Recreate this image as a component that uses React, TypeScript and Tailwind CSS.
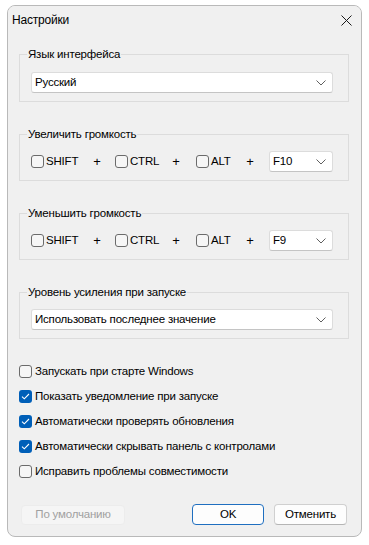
import React from "react";

const font = { fontFamily: '"Liberation Sans", Arial, sans-serif', letterSpacing: "-0.2px" };

function Chevron() {
  return (
    <svg width="10" height="6" viewBox="0 0 10 6" className="shrink-0">
      <path d="M0.5 0.5 L5 5 L9.5 0.5" fill="none" stroke="#5f5f5f" strokeWidth="1" />
    </svg>
  );
}

function Select({ value, className }: { value: string; className: string }) {
  return (
    <div
      className={
        "flex items-center justify-between bg-white border border-[#dcdcdc] border-b-[#c4c4c4] rounded-[3px] pl-[3px] pr-[6px] " +
        className
      }
    >
      <span className="text-[11.5px] text-black leading-none">{value}</span>
      <Chevron />
    </div>
  );
}

function Box({ checked = false }: { checked?: boolean }) {
  if (checked)
    return (
      <div className="w-[13px] h-[13px] rounded-[3px] bg-[#005fb8] flex items-center justify-center shrink-0">
        <svg width="9" height="7" viewBox="0 0 9 7">
          <path d="M1 3.6 L3.3 5.8 L8 1" fill="none" stroke="white" strokeWidth="1.1" />
        </svg>
      </div>
    );
  return <div className="w-[13px] h-[13px] rounded-[3px] border border-[#6b6b6b] bg-[#f6f6f6] shrink-0" />;
}

function Group({ title, children }: { title: string; children: React.ReactNode }) {
  return (
    <fieldset className="border border-[#dcdcdc] w-[330px] px-[11px] pb-[8px]">
      <legend className="-ml-[4px] px-[1px] text-[11.5px] leading-[16px] text-black">{title}</legend>
      {children}
    </fieldset>
  );
}

function Plus({ w }: { w: string }) {
  return <span className={"text-[13px] text-black text-center leading-none " + w}>+</span>;
}

function HotkeyRow({ fkey }: { fkey: string }) {
  return (
    <div className="flex items-center mt-[9px]">
      <div className="flex items-center w-[60px]">
        <Box />
        <span className="ml-[2px] text-[11.5px] leading-none">SHIFT</span>
      </div>
      <Plus w="w-[12px]" />
      <div className="flex items-center w-[55px] ml-[12px]">
        <Box />
        <span className="ml-[2px] text-[11.5px] leading-none">CTRL</span>
      </div>
      <Plus w="w-[12px]" />
      <div className="flex items-center w-[48px] ml-[14px]">
        <Box />
        <span className="ml-[2px] text-[11.5px] leading-none">ALT</span>
      </div>
      <Plus w="w-[12px]" />
      <Select value={fkey} className="ml-[13px] w-[64px] h-[21px]" />
    </div>
  );
}

function Check({ label, checked = false }: { label: string; checked?: boolean }) {
  return (
    <div className="flex items-center h-[25px]">
      <Box checked={checked} />
      <span className="ml-[3px] text-[11.5px] leading-none text-black">{label}</span>
    </div>
  );
}

export default function App() {
  return (
    <div className="w-[369px] h-[545px] bg-white pt-[5px] pl-[7px]" style={font}>
      <div className="w-[355px] h-[532px] rounded-[8px] border border-[#b9b9b9] bg-[#f0f0f0] overflow-hidden flex flex-col">
        <div className="h-[28px] shrink-0 flex items-center justify-between pl-[4px] pr-[9px] bg-[#f0f0f0]">
          <span className="text-[12px] text-black">Настройки</span>
          <svg width="11" height="11" viewBox="0 0 11 11">
            <path d="M0.5 0.5 L10.5 10.5 M10.5 0.5 L0.5 10.5" stroke="#1a1a1a" strokeWidth="1" />
          </svg>
        </div>
        <div className="flex flex-col pl-[11px] pt-[12px]">
          <Group title="Язык интерфейса">
            <Select value="Русский" className="mt-[10px] w-[302px] h-[21px]" />
          </Group>
          <div className="h-[24px] shrink-0" />
          <Group title="Увеличить громкость">
            <HotkeyRow fkey="F10" />
          </Group>
          <div className="h-[24px] shrink-0" />
          <Group title="Уменьшить громкость">
            <HotkeyRow fkey="F9" />
          </Group>
          <div className="h-[24px] shrink-0" />
          <Group title="Уровень усиления при запуске">
            <Select value="Использовать последнее значение" className="mt-[9px] w-[302px] h-[21px]" />
          </Group>
          <div className="mt-[20px] flex flex-col">
            <Check label="Запускать при старте Windows" />
            <Check label="Показать уведомление при запуске" checked />
            <Check label="Автоматически проверять обновления" checked />
            <Check label="Автоматически скрывать панель с контролами" checked />
            <Check label="Исправить проблемы совместимости" />
          </div>
          <div className="mt-[20px] flex items-center">
            <div className="ml-[2px] w-[104px] h-[20px] rounded-[4px] bg-[#f5f5f5] border border-[#ececec] flex items-center justify-center text-[11.5px] text-[#a0a0a0]">
              По умолчанию
            </div>
            <div className="ml-[67px] w-[72px] h-[21px] rounded-[4px] bg-[#fdfdfd] border border-[#1f6fc0] flex items-center justify-center text-[11.5px] text-black">
              OK
            </div>
            <div className="ml-[10px] w-[73px] h-[21px] rounded-[4px] bg-[#fdfdfd] border border-[#d0d0d0] border-b-[#b5b5b5] flex items-center justify-center text-[11.5px] text-black">
              Отменить
            </div>
          </div>
        </div>
      </div>
    </div>
  );
}
